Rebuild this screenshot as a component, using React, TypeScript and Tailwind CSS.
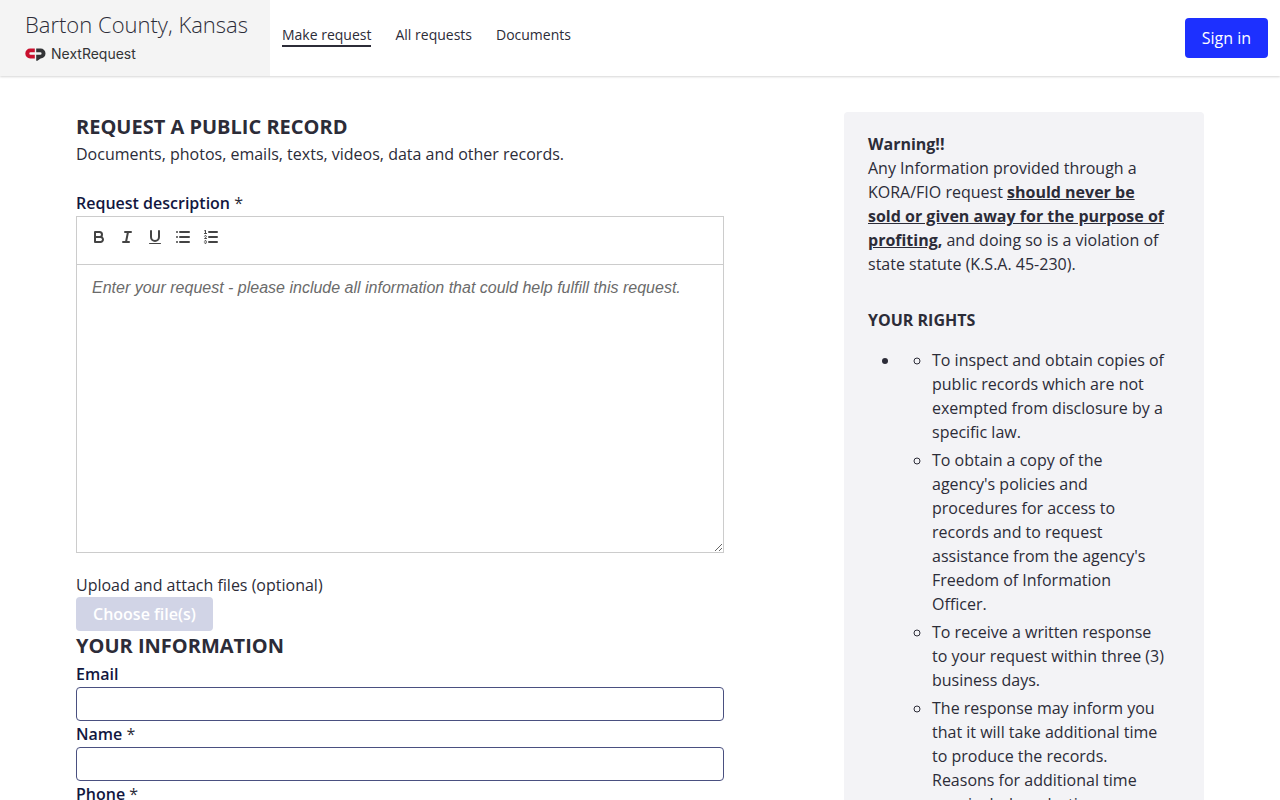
import { useState } from "react";

const navLinks = ["Make request", "All requests", "Documents"];

const rights = [
  "To inspect and obtain copies of public records which are not exempted from disclosure by a specific law.",
  "To obtain a copy of the agency's policies and procedures for access to records and to request assistance from the agency's Freedom of Information Officer.",
  "To receive a written response to your request within three (3) business days.",
  "The response may inform you that it will take additional time to produce the records. Reasons for additional time may include redacting information.",
];

const contactFields = [
  { id: "email", label: "Email", type: "email", required: false },
  { id: "name", label: "Name", type: "text", required: true },
  { id: "phone", label: "Phone", type: "tel", required: true },
];

const toolbarIcons = [
  {
    label: "Bold",
    icon: (
      <>
        <path d="M5,4H9.5A2.5,2.5,0,0,1,12,6.5v0A2.5,2.5,0,0,1,9.5,9H5A0,0,0,0,1,5,9V4A0,0,0,0,1,5,4Z" />
        <path d="M5,9h5.5A2.5,2.5,0,0,1,13,11.5v0A2.5,2.5,0,0,1,10.5,14H5a0,0,0,0,1,0,0V9A0,0,0,0,1,5,9Z" />
      </>
    ),
  },
  {
    label: "Italic",
    icon: (
      <>
        <line x1="7" x2="13" y1="4" y2="4" />
        <line x1="5" x2="11" y1="14" y2="14" />
        <line x1="8" x2="10" y1="14" y2="4" />
      </>
    ),
  },
  {
    label: "Underline",
    icon: (
      <>
        <path d="M5,3V9a4.012,4.012,0,0,0,4,4H9a4.012,4.012,0,0,0,4-4V3" />
        <rect x="3" y="15" width="12" height="1" rx="0.5" ry="0.5" fill="#444444" stroke="none" />
      </>
    ),
  },
  {
    label: "Bulleted list",
    icon: (
      <>
        <line x1="6" x2="15" y1="4" y2="4" />
        <line x1="6" x2="15" y1="9" y2="9" />
        <line x1="6" x2="15" y1="14" y2="14" />
        <line x1="3" x2="3" y1="4" y2="4" />
        <line x1="3" x2="3" y1="9" y2="9" />
        <line x1="3" x2="3" y1="14" y2="14" />
      </>
    ),
  },
  {
    label: "Numbered list",
    icon: (
      <>
        <line x1="7" x2="15" y1="4" y2="4" />
        <line x1="7" x2="15" y1="9" y2="9" />
        <line x1="7" x2="15" y1="14" y2="14" />
        <line x1="2.5" x2="4.5" y1="5.5" y2="5.5" strokeWidth="1" />
        <path
          fill="#444444"
          stroke="none"
          d="M3.5,6A0.5,0.5,0,0,1,3,5.5V3.085l-0.276.138A0.5,0.5,0,0,1,2.053,3c-0.124-.247-0.023-0.324.224-0.447l1-.5A0.5,0.5,0,0,1,4,2.5v3A0.5,0.5,0,0,1,3.5,6Z"
        />
        <path
          strokeWidth="1"
          d="M4.5,10.5h-2c0-.234,1.85-1.076,1.85-2.234A0.959,0.959,0,0,0,2.5,8.156"
        />
        <path
          strokeWidth="1"
          d="M2.5,14.846a0.959,0.959,0,0,0,1.85-.109A0.7,0.7,0,0,0,3.75,14a0.688,0.688,0,0,0,.6-0.736,0.959,0.959,0,0,0-1.85-.109"
        />
      </>
    ),
  },
];

const Logo = () => (
  <svg width="21" height="13" viewBox="0 0 21 13" aria-hidden="true">
    <path
      d="M9.8 0.6H5.2A4.9 4.9 0 0 0 5.2 10.4H9.8V6.8H5.6A1.3 1.3 0 0 1 5.6 4.2H9.8Z"
      fill="#c8102e"
    />
    <path
      d="M11.2 0.6H15.6A4.9 4.9 0 0 1 15.6 10.4L12.4 12.8H11.2V6.8H15.3A1.3 1.3 0 0 0 15.3 4.2H11.2Z"
      fill="#333436"
    />
  </svg>
);

const Header = () => (
  <header className="flex h-[76px] bg-white shadow-[0_1px_2px_rgba(0,0,0,0.16)]">
    <a href="#" className="flex w-[270px] flex-col bg-[#f4f4f4] pt-2 pl-[25px]">
      <span className="text-[22px] leading-8 font-light text-[#2c2c38]">Barton County, Kansas</span>
      <span className="flex items-center gap-[5px] pt-1 text-[#333436]">
        <Logo />
        <span className="font-['Inter',sans-serif] text-sm">NextRequest</span>
      </span>
    </a>
    <nav className="flex items-start gap-6 pt-[25px] pl-3 text-sm">
      {navLinks.map((link, index) => (
        <a
          key={link}
          href="#"
          className={index === 0 ? "border-b-2 border-[#2c2c38]" : "hover:underline"}
        >
          {link}
        </a>
      ))}
    </nav>
    <button
      type="button"
      className="mt-[18px] mr-3 ml-auto h-10 rounded bg-[#1d30ff] px-[17px] text-base font-normal text-white"
    >
      Sign in
    </button>
  </header>
);

const Editor = () => {
  const [text, setText] = useState("");

  return (
    <div className="border border-[#cccccc]">
      <div className="flex h-12 items-start border-b border-[#cccccc] p-2">
        {toolbarIcons.map(({ label, icon }) => (
          <button key={label} type="button" aria-label={label} className="h-6 w-7 px-[5px] py-[3px]">
            <svg
              viewBox="0 0 18 18"
              className="size-[18px]"
              fill="none"
              stroke="#444444"
              strokeWidth="2"
              strokeLinecap="round"
              strokeLinejoin="round"
            >
              {icon}
            </svg>
          </button>
        ))}
      </div>
      <textarea
        id="description"
        value={text}
        onChange={(e) => setText(e.target.value)}
        placeholder="Enter your request - please include all information that could help fulfill this request."
        className="block h-[287px] w-full resize-y px-[15px] py-3 font-['Liberation_Sans',sans-serif] text-base leading-[22px] outline-none placeholder:text-[#6b6b6b] placeholder:italic"
      />
    </div>
  );
};

const RequestForm = () => (
  <form>
    <h1 className="text-xl leading-[30px] font-bold">REQUEST A PUBLIC RECORD</h1>
    <p>Documents, photos, emails, texts, videos, data and other records.</p>

    <div className="mt-6 mb-5">
      <label htmlFor="description" className="block leading-[26px] font-semibold text-[#12173f]">
        Request description <span className="font-normal text-[#2c2c38]">*</span>
      </label>
      <Editor />
    </div>

    <p>Upload and attach files (optional)</p>
    <button
      type="button"
      disabled
      className="block h-[34px] rounded bg-[#d1d4e6] px-[17px] font-semibold text-white"
    >
      Choose file(s)
    </button>

    <h2 className="text-xl leading-[30px] font-bold">YOUR INFORMATION</h2>
    {contactFields.map((field) => (
      <div key={field.id}>
        <label htmlFor={field.id} className="block leading-[26px] font-semibold text-[#12173f]">
          {field.label}
          {field.required && <span className="font-normal text-[#2c2c38]"> *</span>}
        </label>
        <input
          id={field.id}
          type={field.type}
          className="block h-[34px] w-full rounded border border-[#4a5080] px-3"
        />
      </div>
    ))}
  </form>
);

const Sidebar = () => (
  <aside className="rounded bg-[#f3f3f6] py-5 pr-9 pl-6">
    <p>
      <strong>Warning!!</strong>
      <br />
      Any Information provided through a KORA/FIO request{" "}
      <strong>
        <u>should never be sold or given away for the purpose of profiting</u>,
      </strong>{" "}
      and doing so is a violation of state statute (K.S.A. 45-230).
    </p>
    <h2 className="mt-8 mb-4 font-bold">YOUR RIGHTS</h2>
    <ul className="list-disc pl-8">
      <li>
        <ul className="list-[circle] space-y-1 pl-8">
          {rights.map((right) => (
            <li key={right}>{right}</li>
          ))}
        </ul>
      </li>
    </ul>
  </aside>
);

const App = () => {
  return (
    <div className="min-h-screen bg-white font-['Open_Sans',sans-serif] text-base text-[#2c2c38]">
      <Header />
      <main className="mx-auto flex max-w-6xl items-start justify-between pt-9">
        <div className="w-7/12 px-3">
          <RequestForm />
        </div>
        <div className="w-1/3 px-3">
          <Sidebar />
        </div>
      </main>
    </div>
  );
};

export default App;
